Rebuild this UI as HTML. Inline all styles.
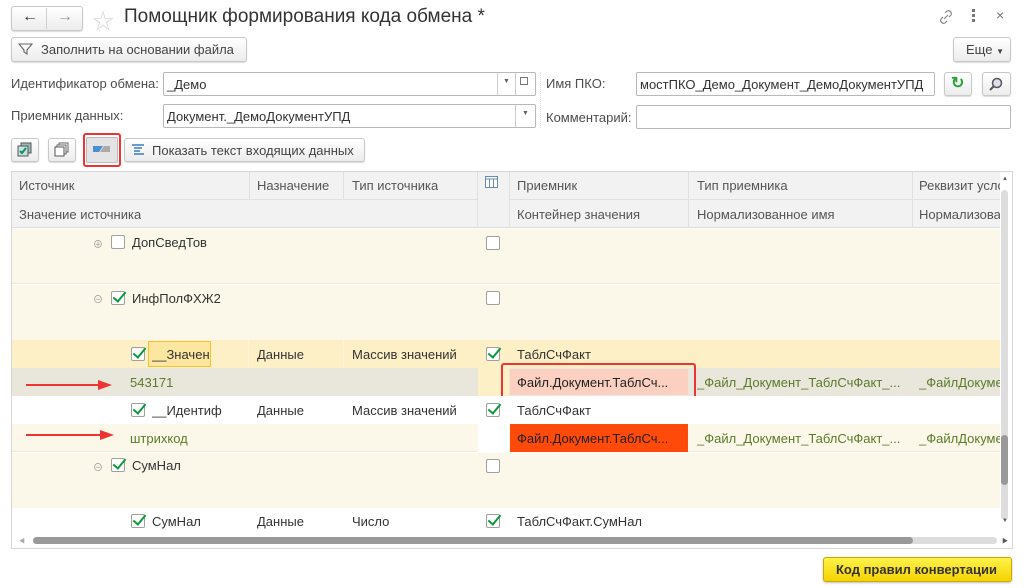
<!DOCTYPE html>
<html><head><meta charset="utf-8"><style>
*{box-sizing:border-box;margin:0;padding:0}
body{width:1024px;height:588px;background:#fff;font-family:"Liberation Sans","Noto Sans CJK SC",sans-serif;font-size:13px;color:#333;position:relative;overflow:hidden}
.a{position:absolute}
.btn{position:absolute;border:1px solid #c8c8c8;border-radius:3px;background:linear-gradient(#fff,#ececec);box-shadow:0 1px 1px rgba(0,0,0,.15)}
.inp{position:absolute;border:1px solid #b9b9b9;border-radius:2px;background:#fff;height:24px;padding:4px 3px;white-space:nowrap;overflow:hidden}
.lbl{position:absolute;color:#4d4d4d}
.t{position:absolute;white-space:nowrap;overflow:hidden}
.cb{position:absolute;width:14px;height:14px;border:1px solid #a0a0a0;border-radius:2px;background:#fff}
.cb.on:after{content:"";position:absolute;left:4px;top:-3px;width:5px;height:11px;border:solid #0a9a3a;border-width:0 2.5px 2.5px 0;transform:rotate(40deg)}
.row{position:absolute;left:12px;width:988px}
.gr{color:#5c7a2a}
</style></head><body>
<!-- top bar -->
<div class="btn" style="left:11px;top:6px;width:72px;height:25px"></div>
<div class="a" style="left:46px;top:8px;width:1px;height:21px;background:#d0d0d0"></div>
<div class="a" style="left:22px;top:8px;font-size:16px;color:#333">&#8592;</div>
<div class="a" style="left:57px;top:8px;font-size:16px;color:#999">&#8594;</div>
<div class="a" style="left:92px;top:4px;font-size:22px;color:#d8d8d8">&#9734;</div>
<div class="a" style="left:124px;top:6px;font-size:19px;color:#333">Помощник формирования кода обмена *</div>
<svg class="a" style="left:937px;top:8px" width="18" height="18" viewBox="0 0 18 18"><g fill="none" stroke="#888" stroke-width="1.2"><path d="M8 5l2-2a3 3 0 014 4l-2 2"/><path d="M10 13l-2 2a3 3 0 01-4-4l2-2"/><path d="M7 11l4-4"/></g></svg>
<div class="a" style="left:972px;top:9px;width:3px;height:3px;background:#777;box-shadow:0 5px #777,0 10px #777"></div>
<div class="a" style="left:996px;top:7px;font-size:14px;color:#777">×</div>
<div class="btn" style="left:11px;top:37px;width:236px;height:25px"></div>
<svg class="a" style="left:18px;top:42px" width="16" height="14"><path d="M1 2h13l-5 6v4l-3-2V8z" fill="none" stroke="#666" stroke-width="1.1"/></svg>
<div class="a" style="left:41px;top:42px;color:#444">Заполнить на основании файла</div>
<div class="btn" style="left:953px;top:37px;width:58px;height:25px"></div>
<div class="a" style="left:966px;top:42px;color:#444">Еще <span style="font-size:8px">▼</span></div>
<!-- form -->
<div class="lbl" style="left:11px;top:76px">Идентификатор обмена:</div>
<div class="inp" style="left:163px;top:72px;width:373px">_Демо</div>
<div class="a" style="left:497px;top:73px;width:1px;height:22px;background:#ccc"></div>
<div class="a" style="left:515px;top:73px;width:1px;height:22px;background:#ccc"></div>
<div class="a" style="left:503px;top:78px;font-size:7px;color:#666">▼</div>
<div class="a" style="left:520px;top:77px;width:8px;height:8px;border:1px solid #777"></div>
<div class="lbl" style="left:11px;top:108px">Приемник данных:</div>
<div class="inp" style="left:163px;top:104px;width:373px">Документ._ДемоДокументУПД</div>
<div class="a" style="left:515px;top:105px;width:1px;height:22px;background:#ccc"></div>
<div class="a" style="left:522px;top:110px;font-size:7px;color:#666">▼</div>
<div class="a" style="left:540px;top:72px;width:1px;height:56px;border-left:1px dotted #ddd"></div>
<div class="lbl" style="left:546px;top:76px">Имя ПКО:</div>
<div class="inp" style="left:636px;top:72px;width:299px">мостПКО_Демо_Документ_ДемоДокументУПД</div>
<div class="btn" style="left:944px;top:72px;width:28px;height:24px"></div>
<div class="a" style="left:951px;top:73px;font-size:16px;color:#2aa33a;font-weight:bold">&#8635;</div>
<div class="btn" style="left:982px;top:72px;width:29px;height:24px"></div>
<svg class="a" style="left:988px;top:76px" width="16" height="16"><circle cx="9" cy="7" r="4.5" fill="#dde" stroke="#555" stroke-width="1.5"/><path d="M5.5 10.5L2 14" stroke="#555" stroke-width="2"/></svg>
<div class="lbl" style="left:546px;top:110px">Комментарий:</div>
<div class="inp" style="left:636px;top:105px;width:375px"></div>
<!-- toolbar -->
<div class="btn" style="left:11px;top:138px;width:28px;height:24px"></div>
<svg class="a" style="left:17px;top:142px" width="16" height="16"><rect x="4" y="1" width="10" height="10" fill="#9bb" stroke="#555"/><rect x="1" y="4" width="10" height="10" fill="#cde" stroke="#555"/><path d="M3 9l2 2 4-5" stroke="#0a9a3a" stroke-width="2" fill="none"/></svg>
<div class="btn" style="left:48px;top:138px;width:28px;height:24px"></div>
<svg class="a" style="left:54px;top:142px" width="16" height="16"><rect x="5" y="1" width="9" height="9" fill="#fff" stroke="#666"/><rect x="3" y="3" width="9" height="9" fill="#fff" stroke="#666"/><rect x="1" y="5" width="9" height="9" fill="#fff" stroke="#555"/></svg>
<div class="a" style="left:83px;top:133px;width:38px;height:34px;border:2px solid #e33;border-radius:3px"></div>
<div class="a" style="left:86px;top:137px;width:32px;height:26px;border:1px solid #bbb;border-radius:2px;background:#e4e4e4"></div>
<svg class="a" style="left:93px;top:144px" width="18" height="10"><path d="M0 2h10l-4 6H0z" fill="#4a90d0"/><path d="M11 2h6v6H7z" fill="#aaa"/></svg>
<div class="btn" style="left:124px;top:138px;width:241px;height:24px"></div>
<svg class="a" style="left:131px;top:143px" width="14" height="14"><g stroke="#3a7ac0" stroke-width="1.5"><path d="M1 2h12M3 5h8M3 8h6M3 11h10"/></g></svg>
<div class="a" style="left:152px;top:143px;color:#444">Показать текст входящих данных</div>
<!-- table -->
<div class="a" style="left:11px;top:171px;width:1002px;height:378px;border:1px solid #d6d6d6;background:#fff"></div>
<div class="a" style="left:12px;top:172px;width:988px;height:56px;background:#f2f2f2;border-bottom:1px solid #ddd"></div>
<div class="a" style="left:12px;top:199px;width:466px;height:1px;background:#e0e0e0"></div>
<div class="a" style="left:509px;top:199px;width:491px;height:1px;background:#e0e0e0"></div>
<div class="a" style="left:249px;top:172px;width:1px;height:27px;background:#e0e0e0"></div>
<div class="a" style="left:343px;top:172px;width:1px;height:27px;background:#e0e0e0"></div>
<div class="a" style="left:477px;top:172px;width:1px;height:56px;background:#e0e0e0"></div>
<div class="a" style="left:509px;top:172px;width:1px;height:56px;background:#e0e0e0"></div>
<div class="a" style="left:688px;top:172px;width:1px;height:56px;background:#e0e0e0"></div>
<div class="a" style="left:912px;top:172px;width:1px;height:56px;background:#e0e0e0"></div>
<div class="t" style="left:19px;top:178px;color:#555">Источник</div>
<div class="t" style="left:257px;top:178px;color:#555">Назначение</div>
<div class="t" style="left:352px;top:178px;color:#555">Тип источника</div>
<svg class="a" style="left:485px;top:176px" width="13" height="12"><rect x=".5" y=".5" width="12" height="11" fill="#fff" stroke="#6a8ab8"/><path d="M.5 3h12M4.5 3v9M8.5 3v9" stroke="#6a8ab8"/></svg>
<div class="t" style="left:517px;top:178px;color:#555">Приемник</div>
<div class="t" style="left:697px;top:178px;color:#555">Тип приемника</div>
<div class="t" style="left:919px;top:178px;width:81px;color:#555">Реквизит условия</div>
<div class="t" style="left:19px;top:207px;color:#555">Значение источника</div>
<div class="t" style="left:517px;top:207px;color:#555">Контейнер значения</div>
<div class="t" style="left:697px;top:207px;color:#555">Нормализованное имя</div>
<div class="t" style="left:919px;top:207px;width:81px;color:#555">Нормализованное</div>
<!-- rows -->
<div class="row" style="top:229px;height:55px;background:#fbf8ea;border-bottom:1px solid #efeadb"></div>
<div class="t" style="left:93px;top:236px;font-size:10px;color:#999">⊕</div>
<div class="cb" style="left:111px;top:235px"></div>
<div class="t" style="left:132px;top:235px">ДопСведТов</div>
<div class="cb" style="left:486px;top:236px"></div>
<div class="row" style="top:285px;height:55px;background:#fbf8ea"></div>
<div class="t" style="left:93px;top:291px;font-size:10px;color:#999">⊖</div>
<div class="cb on" style="left:111px;top:291px"></div>
<div class="t" style="left:132px;top:291px">ИнфПолФХЖ2</div>
<div class="cb" style="left:486px;top:291px"></div>
<div class="row" style="top:340px;height:28px;background:#fdf0c6"></div>
<div class="row" style="top:368px;height:28px;background:#e9e6dc"></div>
<div class="a" style="left:478px;top:368px;width:31px;height:28px;background:#fdf0c6"></div>
<div class="a" style="left:248px;top:340px;width:1px;height:28px;background:#fff4d8"></div>
<div class="a" style="left:343px;top:340px;width:1px;height:28px;background:#fff4d8"></div>
<div class="cb on" style="left:131px;top:347px"></div>
<div class="a" style="left:148px;top:341px;width:63px;height:26px;border:1px solid #f2c233;background:#fde6a0"></div>
<div class="t" style="left:152px;top:347px">__Значен</div>
<div class="t" style="left:257px;top:347px">Данные</div>
<div class="t" style="left:352px;top:347px">Массив значений</div>
<div class="cb on" style="left:486px;top:347px"></div>
<div class="t" style="left:517px;top:347px">ТаблСчФакт</div>
<div class="t gr" style="left:130px;top:375px">543171</div>
<div class="a" style="left:510px;top:369px;width:178px;height:26px;background:#fcd0c0"></div>
<div class="a" style="left:501px;top:363px;width:195px;height:38px;border:2px solid #e33;border-radius:3px"></div>
<div class="t" style="left:517px;top:375px;width:165px;color:#222">Файл.Документ.ТаблСч...</div>
<div class="t gr" style="left:697px;top:375px">_Файл_Документ_ТаблСчФакт_...</div>
<div class="t gr" style="left:919px;top:375px;width:81px">_ФайлДокумент</div>
<div class="row" style="top:396px;height:28px;background:#fff"></div>
<div class="cb on" style="left:131px;top:403px"></div>
<div class="t" style="left:152px;top:403px">__Идентиф</div>
<div class="t" style="left:257px;top:403px">Данные</div>
<div class="t" style="left:352px;top:403px">Массив значений</div>
<div class="cb on" style="left:486px;top:403px"></div>
<div class="t" style="left:517px;top:403px">ТаблСчФакт</div>
<div class="row" style="top:424px;height:28px;background:#fbf8ea;border-bottom:1px solid #efeadb"></div>
<div class="a" style="left:478px;top:424px;width:31px;height:28px;background:#fff"></div>
<div class="a" style="left:510px;top:424px;width:178px;height:28px;background:#ff4a0a"></div>
<div class="t gr" style="left:130px;top:431px">штрихкод</div>
<div class="t" style="left:517px;top:431px;color:#222">Файл.Документ.ТаблСч...</div>
<div class="t gr" style="left:697px;top:431px">_Файл_Документ_ТаблСчФакт_...</div>
<div class="t gr" style="left:919px;top:431px;width:81px">_ФайлДокумент</div>
<!-- arrows -->
<svg class="a" style="left:24px;top:376px" width="90" height="20"><path d="M2 9h76" stroke="#e33" stroke-width="2"/><path d="M74 4l14 5-14 5z" fill="#e33"/></svg>
<svg class="a" style="left:24px;top:426px" width="90" height="20"><path d="M2 9h78" stroke="#e33" stroke-width="2"/><path d="M76 4l14 5-14 5z" fill="#e33"/></svg>
<div class="row" style="top:453px;height:55px;background:#fbf8ea"></div>
<div class="t" style="left:93px;top:459px;font-size:10px;color:#999">⊖</div>
<div class="cb on" style="left:111px;top:458px"></div>
<div class="t" style="left:132px;top:458px">СумНал</div>
<div class="cb" style="left:486px;top:459px"></div>
<div class="row" style="top:508px;height:27px;background:#fff"></div>
<div class="cb on" style="left:131px;top:514px"></div>
<div class="t" style="left:152px;top:514px">СумНал</div>
<div class="t" style="left:257px;top:514px">Данные</div>
<div class="t" style="left:352px;top:514px">Число</div>
<div class="cb on" style="left:486px;top:514px"></div>
<div class="t" style="left:517px;top:514px">ТаблСчФакт.СумНал</div>
<!-- scrollbars -->
<div class="a" style="left:1001px;top:190px;width:7px;height:330px;background:#ddd;border-radius:4px"></div>
<div class="a" style="left:1001px;top:435px;width:7px;height:50px;background:#999;border-radius:4px"></div>
<div class="a" style="left:1002px;top:176px;font-size:6px;color:#555">▲</div>
<div class="a" style="left:1002px;top:518px;font-size:6px;color:#555">▼</div>
<div class="a" style="left:33px;top:537px;width:964px;height:7px;background:#ddd;border-radius:4px"></div>
<div class="a" style="left:33px;top:537px;width:880px;height:7px;background:#999;border-radius:4px"></div>
<div class="a" style="left:19px;top:536px;font-size:6px;color:#aaa">◀</div>
<div class="a" style="left:1002px;top:536px;font-size:6px;color:#555">▶</div>
<!-- bottom button -->
<div class="a" style="left:823px;top:557px;width:189px;height:25px;border:1px solid #c9a800;border-radius:3px;background:linear-gradient(#fff24a,#f5d300);box-shadow:0 1px 2px rgba(0,0,0,.25)"></div>
<div class="a" style="left:836px;top:562px;color:#333;font-weight:bold">Код правил конвертации</div>
</body></html>
